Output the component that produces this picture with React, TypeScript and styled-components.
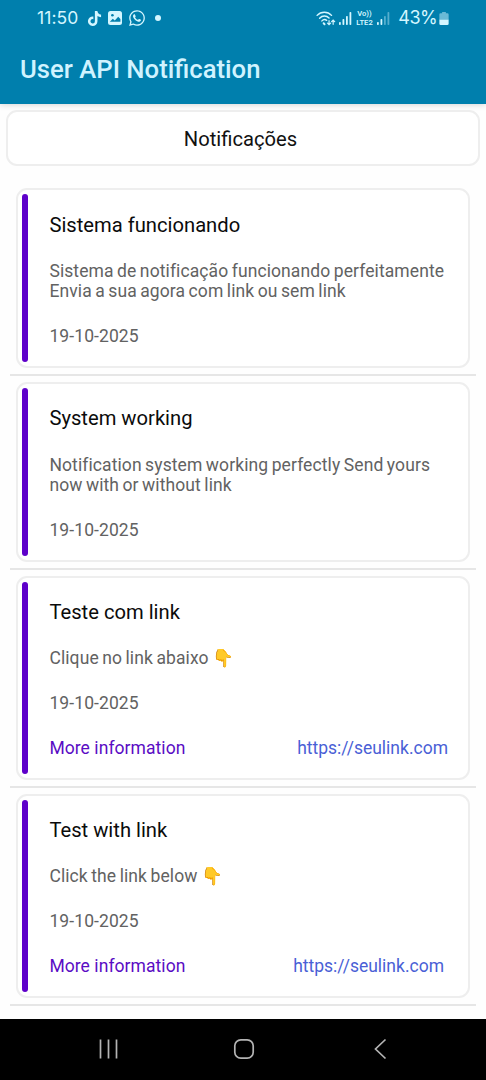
import React from "react";
import styled, { createGlobalStyle } from "styled-components";
import { FaTiktok, FaWhatsapp } from "react-icons/fa6";

const GlobalStyle = createGlobalStyle`
  * { box-sizing: border-box; }
  body { margin: 0; background: #fff; font-family: Roboto, sans-serif; }
`;

const Screen = styled.div`
  width: 486px;
  height: 1080px;
  display: flex;
  flex-direction: column;
  overflow: hidden;
  background: #fefefe;
`;

const Header = styled.header`
  flex: none;
  height: 104px;
  background: #007fad;
  box-shadow: 0 1px 6px rgba(0, 0, 0, 0.16);
`;

const StatusBar = styled.div`
  height: 36px;
  padding: 0 37px 0 37px;
  display: flex;
  align-items: center;
  justify-content: space-between;
  color: #d4f6ff;
`;

const StatusGroup = styled.div<{ $gap: number }>`
  display: flex;
  align-items: center;
  gap: ${(p) => p.$gap}px;
`;

const StatusText = styled.span<{ $size: number; $width: number; $tracking: number }>`
  width: ${(p) => p.$width}px;
  font-family: Inter, sans-serif;
  font-size: ${(p) => p.$size}px;
  line-height: 20px;
  letter-spacing: ${(p) => p.$tracking}px;
  white-space: nowrap;
`;

const VoLte = styled.span`
  display: flex;
  flex-direction: column;
  align-items: center;
  width: 18px;
  font-size: 7.6px;
  font-weight: 600;
  line-height: 9px;
  white-space: nowrap;
`;

const AppTitle = styled.h1`
  margin: 0;
  padding: 18px 20px 0;
  font-size: 25.7px;
  font-weight: 500;
  line-height: 30px;
  color: #d0f3ff;
`;

const Content = styled.main`
  flex: 1;
  min-height: 0;
  display: flex;
  flex-direction: column;
`;

const SectionTitle = styled.h2`
  flex: none;
  height: 56px;
  margin: 6px 6px 22px;
  display: flex;
  align-items: center;
  justify-content: center;
  border: 2px solid #eeeeee;
  border-radius: 11px;
  background: #fff;
  font-size: 20.2px;
  font-weight: 400;
  line-height: 24px;
  color: #111;
  padding: 2px 5px 0 0;
`;

const List = styled.ul`
  margin: 0;
  padding: 0 10px;
  list-style: none;
`;

const Item = styled.li<{ $tall?: boolean }>`
  height: ${(p) => (p.$tall ? 218 : 193.9)}px;
  padding-bottom: 6px;
  display: flex;
  flex-direction: column;
`;

const Card = styled.article`
  flex: 1;
  margin: 0 6px 6px;
  display: flex;
  gap: 21.4px;
  padding: 4px 20px 4px 4px;
  border: 2px solid #eeeeee;
  border-radius: 11px;
  background: #fff;
`;

const Accent = styled.span`
  flex: none;
  width: 6px;
  border-radius: 3px;
  background: #5e00ca;
`;

const Divider = styled.hr`
  flex: none;
  width: 100%;
  height: 2px;
  margin: 0;
  border: 0;
  background: #e6e6e6;
`;

const CardBody = styled.div`
  flex: 1;
  min-width: 0;
  padding-top: 18.55px;
  display: flex;
  flex-direction: column;
  gap: 24.15px;
`;

const CardTitle = styled.h3`
  margin: 0;
  font-size: 20.2px;
  font-weight: 400;
  line-height: 24px;
  color: #0b0b0b;
`;

const Line = styled.p`
  margin: 0;
  font-size: 17.5px;
  line-height: 20.4px;
  letter-spacing: 0.1px;
  word-spacing: -1px;
  color: #626262;
  white-space: pre;
`;

const Links = styled.div<{ $inset: number }>`
  display: flex;
  justify-content: space-between;
  padding-right: ${(p) => p.$inset}px;
  font-size: 17.5px;
  line-height: 20.4px;
`;

const More = styled.span`
  letter-spacing: 0.06px;
  color: #5a0cc4;
`;

const Url = styled.a`
  color: #4a5fd6;
`;

const NavBar = styled.nav`
  flex: none;
  height: 61px;
  padding: 0 94px 2px 97px;
  display: flex;
  align-items: center;
  justify-content: space-between;
  background: #000;
`;

const WifiIcon = () => (
  <svg width="20" height="17" viewBox="0 0 21 17" fill="none" stroke="currentColor" strokeWidth="1.5" strokeLinecap="round">
    <path d="M1.2 5.2C5.2.8 12.3.8 16.3 5.2M3.8 8.2c2.8-3 7.2-3 9.9-.2M6.2 11c1.4-1.5 3.5-1.7 5-.6" />
    <path d="M8 13.5l1 1" strokeWidth="2" />
    <path d="M13.7 10.8v4M12.1 13.4l1.6 1.6 1.6-1.6M18 14.6v-4M16.4 11.8l1.6-1.6 1.6 1.6" strokeWidth="1.3" />
  </svg>
);

const SignalIcon = ({ level }: { level: number }) => (
  <svg width="13" height="13" viewBox="0 0 13 13" fill="currentColor">
    {[3, 6, 9, 13].map((h, i) => (
      <rect key={h} x={i * 3.5} y={13 - h} width="1.8" height={h} rx=".7" opacity={i < level ? 1 : 0.4} />
    ))}
  </svg>
);

const GalleryIcon = () => (
  <svg width="14" height="14" viewBox="0 0 14 14">
    <rect width="14" height="14" rx="2.5" fill="currentColor" />
    <circle cx="4.4" cy="4.3" r="1.3" fill="#007fad" />
    <path d="M1.8 10.8l3-3 2 1.6 3.4-3.7 2.2 2.4v2.7z" fill="#007fad" />
  </svg>
);

const BatteryIcon = () => (
  <svg width="10" height="13" viewBox="0 0 10 14" fill="currentColor">
    <path d="M3 0h4v1.4h1.6Q10 1.4 10 2.8V8H0V2.8Q0 1.4 1.4 1.4H3z" opacity=".5" />
    <path d="M0 8h10v4.6Q10 14 8.6 14H1.4Q0 14 0 12.6z" />
  </svg>
);

const Dot = styled.span`
  width: 6px;
  height: 6px;
  margin-left: 3px;
  border-radius: 50%;
  background: currentColor;
`;

const NavIcon = styled.svg`
  width: 24px;
  height: 24px;
  fill: none;
  stroke: #b4b4b4;
  stroke-width: 1.7;
`;

type Notice = { title: string; text: string; date: string; url?: string; inset?: number };

const notices: Notice[] = [
  {
    title: "Sistema funcionando",
    text: "Sistema de notificação funcionando perfeitamente\nEnvia a sua agora com link ou sem link",
    date: "19-10-2025",
  },
  {
    title: "System working",
    text: "Notification system working perfectly Send yours\nnow with or without link",
    date: "19-10-2025",
  },
  { title: "Teste com link", text: "Clique no link abaixo 👇", date: "19-10-2025", url: "https://seulink.com", inset: 0 },
  { title: "Test with link", text: "Click the link below 👇", date: "19-10-2025", url: "https://seulink.com", inset: 4 },
];

export default function App() {
  return (
    <Screen>
      <GlobalStyle />
      <Header>
        <StatusBar>
          <StatusGroup $gap={6}>
            <StatusText $size={17.5} $width={43.5} $tracking={0.1}>11:50</StatusText>
            <FaTiktok size={15} />
            <GalleryIcon />
            <FaWhatsapp size={18} />
            <Dot />
          </StatusGroup>
          <StatusGroup $gap={3.5}>
            <WifiIcon />
            <SignalIcon level={4} />
            <VoLte>
              <span>Vo))</span>
              <span>LTE2</span>
            </VoLte>
            <SignalIcon level={2} />
            <StatusText $size={18} $width={42} $tracking={-0.4}>&nbsp;43%</StatusText>
            <BatteryIcon />
          </StatusGroup>
        </StatusBar>
        <AppTitle>User API Notification</AppTitle>
      </Header>
      <Content>
        <SectionTitle>Notificações</SectionTitle>
        <List>
          {notices.map((n) => (
            <Item key={n.title} $tall={!!n.url}>
              <Card>
                <Accent />
                <CardBody>
                  <CardTitle>{n.title}</CardTitle>
                  <Line>{n.text}</Line>
                  <Line>{n.date}</Line>
                  {n.url && (
                    <Links $inset={n.inset ?? 0}>
                      <More>More information</More>
                      <Url>{n.url}</Url>
                    </Links>
                  )}
                </CardBody>
              </Card>
              <Divider />
            </Item>
          ))}
        </List>
      </Content>
      <NavBar>
        <NavIcon viewBox="0 0 24 24">
          <path d="M3.5 2.5v19M11.5 2.5v19M19.5 2.5v19" />
        </NavIcon>
        <NavIcon viewBox="0 0 24 24">
          <rect x="1.8" y="2.8" width="18.4" height="18.4" rx="6" />
        </NavIcon>
        <NavIcon viewBox="0 0 24 24">
          <path d="M17.5 2.5L7.5 12l10 9.5" />
        </NavIcon>
      </NavBar>
    </Screen>
  );
}
